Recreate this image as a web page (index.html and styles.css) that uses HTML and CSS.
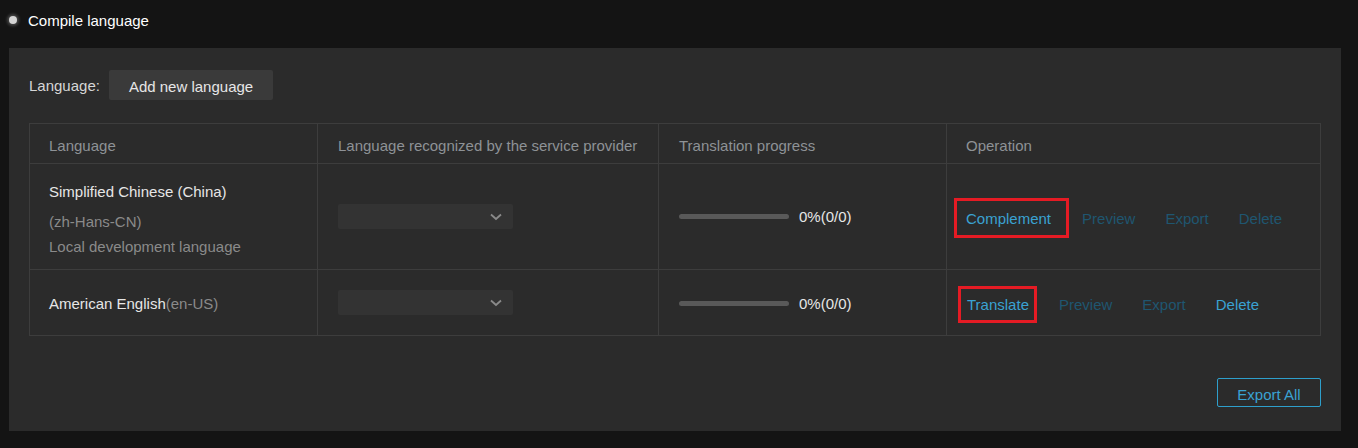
FILE: index.html
```html
<!DOCTYPE html>
<html lang="en">
<head>
<meta charset="utf-8">
<title>Compile language</title>
<link rel="stylesheet" href="styles.css">
</head>
<body>
<div class="title"><span class="dot"></span><span>Compile language</span></div>
<div class="panel">
  <div class="toolbar">
    <span class="label">Language:</span>
    <button class="btn-add">Add new language</button>
  </div>
  <table class="grid">
    <colgroup>
      <col class="c1"><col class="c2"><col class="c3"><col class="c4">
    </colgroup>
    <thead>
      <tr class="head-row">
        <th class="first">Language</th>
        <th>Language recognized by the service provider</th>
        <th>Translation progress</th>
        <th>Operation</th>
      </tr>
    </thead>
    <tbody>
      <tr class="row-1">
        <td class="lang-cell first">
          <div class="lang-main">Simplified Chinese (China)</div>
          <div class="lang-sub">(zh-Hans-CN)</div>
          <div class="lang-sub">Local development language</div>
        </td>
        <td>
          <div class="select"><svg class="chev" width="12" height="8" viewBox="0 0 12 8"><polyline points="1,1.5 6,6 11,1.5" fill="none" stroke="#8a8a8a" stroke-width="1.8"/></svg></div>
        </td>
        <td>
          <div class="progress"><span class="bar"></span><span class="pct">0%(0/0)</span></div>
        </td>
        <td>
          <div class="ops">
            <a class="op on mark mark-complement">Complement</a>
            <a class="op off">Preview</a>
            <a class="op off">Export</a>
            <a class="op off">Delete</a>
          </div>
        </td>
      </tr>
      <tr class="row-2">
        <td class="lang-cell first"><span class="lang-main">American English</span><span class="lang-code">(en-US)</span></td>
        <td>
          <div class="select"><svg class="chev" width="12" height="8" viewBox="0 0 12 8"><polyline points="1,1.5 6,6 11,1.5" fill="none" stroke="#8a8a8a" stroke-width="1.8"/></svg></div>
        </td>
        <td>
          <div class="progress progress-2"><span class="bar"></span><span class="pct">0%(0/0)</span></div>
        </td>
        <td>
          <div class="ops ops-2">
            <a class="op on mark mark-translate">Translate</a>
            <a class="op off">Preview</a>
            <a class="op off">Export</a>
            <a class="op on">Delete</a>
          </div>
        </td>
      </tr>
    </tbody>
  </table>
  <div class="footer">
    <button class="btn-export">Export All</button>
  </div>
</div>
</body>
</html>
```
FILE: styles.css
```css
html, body {
  margin: 0;
  padding: 0;
  background: #141414;
  font-family: "Liberation Sans", Arial, sans-serif;
  font-size: 15px;
}
.title {
  height: 40px;
  display: flex;
  align-items: center;
  padding-left: 9px;
  color: #ffffff;
  font-size: 15px;
}
.dot {
  width: 8px;
  height: 8px;
  border-radius: 50%;
  background: #d4d4d4;
  box-shadow: 0 0 3px 2px rgba(255, 255, 255, 0.22);
  margin-right: 11px;
}
.panel {
  margin: 8px 17px 0 9px;
  height: 383px;
  box-sizing: border-box;
  padding: 22px 20px 24px 20px;
  background: #2b2b2b;
}
.toolbar {
  display: flex;
  align-items: center;
  height: 30px;
}
.label {
  color: #d6d6d6;
  margin-right: 9px;
}
.btn-add {
  height: 30px;
  padding: 3px 20px 0 20px;
  border: none;
  border-radius: 2px;
  background: #3a3a3a;
  color: #e6e6e6;
  font-family: inherit;
  font-size: 15px;
}
.grid {
  margin-top: 23px;
  width: 1291px;
  table-layout: fixed;
  border-collapse: collapse;
}
.c1 { width: 288px; }
.c2 { width: 341px; }
.c3 { width: 288px; }
.c4 { width: 374px; }
.grid th, .grid td {
  border: 1px solid #3d3d3d;
  padding: 0 20px;
  text-align: left;
  vertical-align: middle;
  font-weight: normal;
}
.grid th.first, .grid td.first { padding-left: 19px; }
.grid th {
  color: #8e9296;
  font-size: 15px;
  padding-top: 4px;
}
.grid th:last-child, .grid td:last-child { padding-left: 19px; }
.head-row { height: 40px; }
.row-1 { height: 106px; }
.row-2 { height: 66px; }
.lang-cell { color: #e6e6e6; }
.row-1 .lang-cell {
  vertical-align: top;
  padding-top: 18px;
}
.lang-main {
  color: #e6e6e6;
  line-height: 20px;
}
.row-1 .lang-main { margin-bottom: 7px; }
.lang-sub {
  color: #8a8a8a;
  line-height: 25px;
}
.lang-code { color: #8a8a8a; }
.row-2 .lang-cell { padding-top: 3px; }
.select {
  width: 175px;
  height: 25px;
  background: #333333;
  border-radius: 2px;
  display: flex;
  align-items: center;
  justify-content: flex-end;
  box-sizing: border-box;
  padding-right: 11px;
}
.progress {
  display: flex;
  align-items: center;
}
.progress-2 { margin-top: 2px; }
.bar {
  width: 110px;
  height: 5px;
  border-radius: 3px;
  background: #595959;
  margin-right: 10px;
}
.pct {
  color: #e6e6e6;
  line-height: 20px;
}
.ops {
  display: flex;
  align-items: center;
  line-height: 20px;
  margin-top: 4px;
}
.ops-2 { padding-left: 1px; margin-top: 4px; }
.op {
  margin-right: 30px;
  cursor: pointer;
}
.mark-complement { margin-right: 31px; }
.on { color: #3aa2d2; }
.off { color: #1f5670; }
.mark { position: relative; }
.mark::after {
  content: "";
  position: absolute;
  border: 3px solid #e51b24;
  box-sizing: border-box;
}
.mark-complement::after {
  left: -12px;
  right: -18px;
  top: -11px;
  bottom: -9px;
}
.mark-translate::after {
  left: -9px;
  right: -8px;
  top: -9px;
  bottom: -8px;
}
.footer {
  display: flex;
  justify-content: flex-end;
  margin-top: 42px;
}
.btn-export {
  width: 104px;
  height: 29px;
  border: 1px solid #2e9fcb;
  border-radius: 2px;
  background: transparent;
  color: #3aa2d2;
  font-family: inherit;
  font-size: 15px;
  padding: 4px 0 0 0;
}
```
